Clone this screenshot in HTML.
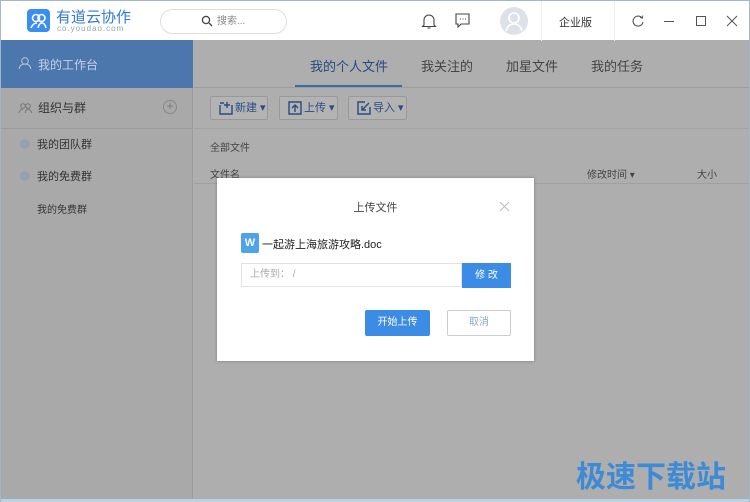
<!DOCTYPE html>
<html><head><meta charset="utf-8"><style>
*{margin:0;padding:0;box-sizing:border-box}
html{background:#aeaeae}
body{width:750px;height:502px;overflow:hidden;font-family:"Liberation Sans","Noto Sans CJK SC",sans-serif;background:#aeaeae;position:relative;font-size:12px;color:#333}
.abs{position:absolute}
.top{left:0;top:0;width:750px;height:40px;background:#fff;border-top:1px solid #9fb8cc}
.side{left:1px;top:40px;width:192px;height:462px;background:#a9a9a9;border-right:1px solid #9c9c9c}
.btn{top:96px;height:24px;border:1px solid #999;background:#b3b3b3;border-radius:2px;color:#2a4c80;font-size:11px;line-height:22px;padding-left:24px}
.btn svg{position:absolute;left:8px;top:4px}
.dlg{left:217px;top:178px;width:317px;height:183px;background:#fff;box-shadow:0 0 3px rgba(0,0,0,.3)}
</style></head><body>
<div class="abs top">
 <div class="abs" style="left:27px;top:8px;width:23px;height:23px;background:#3a8ef0;border-radius:4px"><svg width="23" height="23"><circle cx="9" cy="9" r="3.5" fill="none" stroke="#fff" stroke-width="1.6"/><circle cx="14.5" cy="9" r="3.5" fill="none" stroke="#fff" stroke-width="1.6"/><path d="M4 19q2-5 6-5M11 19q1-5 4-5t4 5" fill="none" stroke="#fff" stroke-width="1.6"/></svg></div>
 <div class="abs" style="left:56px;top:5px;font-size:15px;color:#2f7ad6">有道云协作</div>
 <div class="abs" style="left:57px;top:23px;font-size:8px;color:#8aa;letter-spacing:1px">co.youdao.com</div>
 <div class="abs" style="left:160px;top:8px;width:127px;height:25px;border:1px solid #ddd;border-radius:13px;font-size:10px;color:#888;line-height:23px;padding-left:56px">搜索...</div>
 <svg class="abs" style="left:201px;top:14px" width="12" height="12"><circle cx="5" cy="5" r="3.6" fill="none" stroke="#444" stroke-width="1.3"/><path d="M8 8l3 3" stroke="#444" stroke-width="1.3"/></svg>
 <svg class="abs" style="left:421px;top:11px" width="16" height="18"><path d="M3 13V8a5 5 0 0110 0v5l1.5 1.5h-13zM6.5 16h3" fill="none" stroke="#444" stroke-width="1.1"/></svg>
 <svg class="abs" style="left:455px;top:12px" width="16" height="15"><path d="M1 1h13v10H6l-3 3v-3H1z" fill="none" stroke="#444" stroke-width="1.1"/><path d="M5 6h1M7.5 6h1M10 6h1" stroke="#444"/></svg>
 <div class="abs" style="left:500px;top:6px;width:28px;height:28px;border-radius:50%;background:#dde1e8"><svg width="28" height="28"><circle cx="14" cy="11" r="5" fill="none" stroke="#fff" stroke-width="1.6"/><path d="M6 24q2-7 8-7t8 7" fill="none" stroke="#fff" stroke-width="1.6"/></svg></div>
 <div class="abs" style="left:541px;top:0;width:1px;height:40px;background:#eee"></div>
 <div class="abs" style="left:559px;top:13px;font-size:11px">企业版</div>
 <div class="abs" style="left:614px;top:0;width:1px;height:40px;background:#eee"></div>
 <svg class="abs" style="left:631px;top:13px" width="14" height="14"><path d="M11 4A5 5 0 1 0 12 8" fill="none" stroke="#555" stroke-width="1.1"/><path d="M9 3.5l2.5.5.3-2.5" fill="none" stroke="#555"/></svg>
 <div class="abs" style="left:664px;top:20px;width:10px;height:1px;background:#555"></div>
 <div class="abs" style="left:696px;top:15px;width:10px;height:10px;border:1px solid #555"></div>
 <svg class="abs" style="left:726px;top:14px" width="12" height="12"><path d="M1 1l10 10M11 1L1 11" stroke="#555" stroke-width="1"/></svg>
</div>
<div class="abs side">
 <div class="abs" style="left:0;top:0;width:192px;height:48px;background:#4b77ad"></div>
 <svg class="abs" style="left:17px;top:16px" width="14" height="14"><circle cx="7" cy="5" r="3.3" fill="none" stroke="#b8c8dd"/><path d="M1 13q1-5 6-5t6 5" fill="none" stroke="#b8c8dd"/></svg>
 <div class="abs" style="left:37px;top:16px;color:#c5d2e3;font-size:12px">我的工作台</div>
 <div class="abs" style="left:0;top:88px;width:192px;height:1px;background:#9c9c9c"></div>
 <svg class="abs" style="left:17px;top:62px" width="16" height="12"><circle cx="5" cy="4" r="2.3" fill="none" stroke="#777"/><circle cx="10" cy="4" r="2.3" fill="none" stroke="#777"/><path d="M1 11q1-4 4-4M7 11q1-4 3-4t4 4" fill="none" stroke="#777"/></svg>
 <div class="abs" style="left:37px;top:59px;color:#333">组织与群</div>
 <div class="abs" style="left:162px;top:60px;width:14px;height:14px;border:1px solid #888;border-radius:50%;color:#777;font-size:12px;line-height:11px;text-align:center">+</div>
 <div class="abs" style="left:19px;top:99px;width:10px;height:10px;border-radius:50%;background:#98a0ad"></div>
 <div class="abs" style="left:36px;top:96px;color:#333;font-size:11px">我的团队群</div>
 <div class="abs" style="left:19px;top:131px;width:10px;height:10px;border-radius:50%;background:#98a0ad"></div>
 <div class="abs" style="left:36px;top:128px;color:#333;font-size:11px">我的免费群</div>
 <div class="abs" style="left:36px;top:161px;color:#333;font-size:10px">我的免费群</div>
</div>
<div class="abs" style="left:194px;top:87px;width:556px;height:1px;background:#9d9d9d"></div>
<div class="abs" style="left:310px;top:56px;font-size:13px;color:#264a80">我的个人文件</div>
<div class="abs" style="left:295px;top:85px;width:107px;height:2px;background:#3a6aa8"></div>
<div class="abs" style="left:421px;top:56px;font-size:13px;color:#444">我关注的</div>
<div class="abs" style="left:506px;top:56px;font-size:13px;color:#444">加星文件</div>
<div class="abs" style="left:591px;top:56px;font-size:13px;color:#444">我的任务</div>
<div class="abs btn" style="left:210px;width:58px"><svg width="14" height="14"><path d="M1 4v9h12V4M5 2h-4" fill="none" stroke="#2a4c80" stroke-width="1.4"/><path d="M8 1v6M5 4h6" stroke="#2a4c80" stroke-width="1.4"/></svg>新建 ▾</div>
<div class="abs btn" style="left:279px;width:59px"><svg width="14" height="14"><path d="M1 1h12v12H1z" fill="none" stroke="#2a4c80" stroke-width="1.4"/><path d="M7 11V4M4 7l3-3 3 3" fill="none" stroke="#2a4c80" stroke-width="1.4"/></svg>上传 ▾</div>
<div class="abs btn" style="left:348px;width:59px"><svg width="14" height="14"><path d="M13 6v7H1V1h7" fill="none" stroke="#2a4c80" stroke-width="1.4"/><path d="M12 2L5 9M5 5v4h4" fill="none" stroke="#2a4c80" stroke-width="1.4"/></svg>导入 ▾</div>
<div class="abs" style="left:194px;top:128px;width:556px;height:1px;background:#a4a4a4"></div>
<div class="abs" style="left:210px;top:139px;font-size:10px;color:#444">全部文件</div>
<div class="abs" style="left:210px;top:166px;font-size:10px;color:#444">文件名</div>
<div class="abs" style="left:587px;top:166px;font-size:10px;color:#444">修改时间 ▾</div>
<div class="abs" style="left:697px;top:166px;font-size:10px;color:#444">大小</div>
<div class="abs" style="left:194px;top:183px;width:556px;height:1px;background:#a0a0a0"></div>
<div class="abs dlg">
 <div class="abs" style="left:0;top:21px;width:317px;text-align:center;font-size:11px;color:#444">上传文件</div>
 <svg class="abs" style="left:282px;top:23px" width="11" height="11"><path d="M1 1l9 9M10 1l-9 9" stroke="#bbb"/></svg>
 <div class="abs" style="left:24px;top:55px;width:18px;height:20px;background:#4ea3ea;border-radius:2px;color:#fff;font-size:11px;font-weight:bold;text-align:center;line-height:20px">W</div>
 <div class="abs" style="left:45px;top:58px;font-size:11px;color:#222">一起游上海旅游攻略.doc</div>
 <div class="abs" style="left:24px;top:85px;width:221px;height:24px;border:1px solid #e2e2e2;font-size:10px;color:#aaa;line-height:22px;padding-left:8px">上传到： /</div>
 <div class="abs" style="left:245px;top:85px;width:49px;height:25px;background:#3c8ce6;color:#fff;font-size:10px;text-align:center;line-height:25px">修 改</div>
 <div class="abs" style="left:148px;top:132px;width:65px;height:26px;background:#3c8ce6;border-radius:2px;color:#fff;font-size:10px;text-align:center;line-height:26px">开始上传</div>
 <div class="abs" style="left:230px;top:132px;width:64px;height:26px;border:1px solid #ccc;border-radius:2px;color:#8ab;font-size:10px;text-align:center;line-height:24px">取消</div>
</div>
<div class="abs" style="left:576px;top:452px;font-size:30px;color:#3d8ad6;font-weight:bold;letter-spacing:0">极速下载站</div>
<div class="abs" style="left:0;top:499px;width:750px;height:3px;background:#b8d4e4"></div>
<div class="abs" style="left:0;top:0;width:1px;height:502px;background:#9fb8cc"></div>
<div class="abs" style="left:749px;top:0;width:1px;height:502px;background:#9fb8cc"></div>
</body></html>
